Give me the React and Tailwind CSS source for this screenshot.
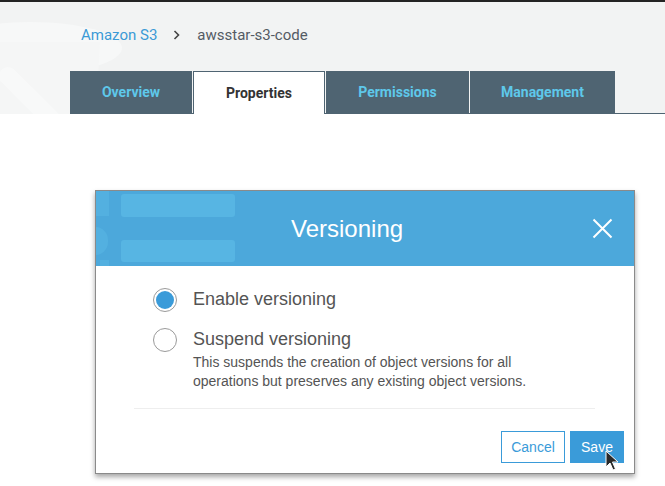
import React, { useState } from 'react';

const tabs = ['Overview', 'Properties', 'Permissions', 'Management'];
const tabWidths = { Overview: 'w-[122px]', Properties: 'w-[132px]', Permissions: 'w-[143px]', Management: 'w-[145px]' };

const Radio = ({ checked }) => (
    <span className="w-[24px] h-[24px] rounded-full border border-[#9a9a9a] bg-white flex items-center justify-center shrink-0">
        {checked && <span className="w-[18px] h-[18px] rounded-full bg-[#3a9bd9]" />}
    </span>
);

const App = () => {
    const [activeTab] = useState('Properties');
    const [mode, setMode] = useState('enable');

    return (
        <div className="w-[665px] h-[486px] bg-white overflow-hidden relative font-['Liberation_Sans',Arial,sans-serif]">
            <div className="h-[2px] bg-[#232323]" />

            {/* header with breadcrumb and tabs */}
            <div className="relative h-[112px] bg-[#f2f3f3] border-b border-[#4f6472] flex flex-col">
                <svg className="absolute left-0 top-0" width="130" height="112" viewBox="0 0 130 112" fill="none">
                    <ellipse cx="30" cy="46" rx="92" ry="26" fill="#f7f8f8" />
                    <path d="M0 40 L100 40 L96 112 L0 112 Z" fill="#f5f6f6" />
                    <path d="M8 74 L62 128" stroke="#f8f9f9" strokeWidth="18" strokeLinecap="round" />
                </svg>
                <div className="relative flex items-center h-[66px] pl-[81px] text-[15px] font-['Roboto',Arial,sans-serif]">
                    <span className="text-[#3b9ad6]">Amazon S3</span>
                    <span className="ml-[16px] mr-[17px] text-[#444]">
                        <svg width="7" height="10" viewBox="0 0 7 10" fill="none">
                            <path d="M1.5 1 L5.5 5 L1.5 9" stroke="#444" strokeWidth="1.6" />
                        </svg>
                    </span>
                    <span className="text-[#545b64]">awsstar-s3-code</span>
                </div>
                <div className="relative flex gap-[1px] ml-[70px] mt-[3px] mb-[-1px] font-['Roboto',Arial,sans-serif]">
                    {tabs.map(tab => (
                        <div
                            key={tab}
                            className={`${tabWidths[tab]} h-[43px] flex items-center justify-center text-[14px] font-bold ${
                                tab === activeTab
                                    ? 'bg-white text-[#333] border border-b-0 border-[#4f6472]'
                                    : 'bg-[#4f6472] text-[#5ec8ea]'
                            }`}
                        >
                            {tab}
                        </div>
                    ))}
                </div>
            </div>

            {/* Versioning dialog */}
            <div className="ml-[95px] mt-[76px] w-[540px] h-[284px] bg-white border border-[#8a8a8a] shadow-[0_3px_5px_rgba(0,0,0,0.35)] flex flex-col">
                <div className="relative h-[75px] bg-[#4ca8db] flex items-center overflow-hidden">
                    <div className="absolute left-[25px] top-[3px] w-[114px] h-[23px] rounded-[3px] bg-[#57b5e3]" />
                    <div className="absolute left-[25px] top-[49px] w-[114px] h-[22px] rounded-[3px] bg-[#57b5e3]" />
                    <div className="absolute left-0 top-0 w-[13px] h-[25px] bg-[#53b0e0]" />
                    <div className="absolute left-[-14px] top-[36px] w-[26px] h-[28px] rounded-full bg-[#53b0e0]" />
                    <div className="absolute left-[4px] top-[69px] w-[9px] h-[6px] bg-[#53b0e0]" />
                    <h2 className="relative ml-[195px] text-[24px] text-white font-normal">Versioning</h2>
                    <button className="absolute right-[21px] top-[27px] w-[21px] h-[21px]">
                        <svg width="21" height="21" viewBox="0 0 21 21" fill="none">
                            <path d="M1.5 1.5 L19.5 19.5 M19.5 1.5 L1.5 19.5" stroke="#fff" strokeWidth="2" />
                        </svg>
                    </button>
                </div>

                <div className="flex-1 flex flex-col px-[57px] pt-[20px] text-[#545454]">
                    <label className="flex items-center gap-[16px] cursor-pointer" onClick={() => setMode('enable')}>
                        <Radio checked={mode === 'enable'} />
                        <span className="text-[18px]">Enable versioning</span>
                    </label>
                    <label className="flex items-center gap-[16px] mt-[13px] cursor-pointer" onClick={() => setMode('suspend')}>
                        <Radio checked={mode === 'suspend'} />
                        <span className="text-[18px]">Suspend versioning</span>
                    </label>
                    <p className="ml-[40px] text-[14px] leading-[19px]">
                        This suspends the creation of object versions for all<br />
                        operations but preserves any existing object versions.
                    </p>
                    <div className="mt-[17px] ml-[-19px] mr-[-18px] border-t border-[#eeeeee]" />
                </div>

                <div className="flex justify-end gap-[5px] pr-[10px] pb-[10px]">
                    <button className="relative h-[32px] w-[64px] border border-[#3a9bd9] text-[#3a9bd9] text-[14px] bg-white">Cancel</button>
                    <button className="relative h-[32px] w-[54px] bg-[#3a9bd9] text-white text-[14px]">
                        Save
                        <svg className="absolute left-[35px] top-[19px]" width="14" height="22" viewBox="0 0 14 22">
                            <path d="M1 1 L1 17 L5 13 L8 20 L10.5 19 L7.5 12 L13 12 Z" fill="#2a2a2a" stroke="#fff" strokeWidth="1" />
                        </svg>
                    </button>
                </div>
            </div>
        </div>
    );
};

export default App;
